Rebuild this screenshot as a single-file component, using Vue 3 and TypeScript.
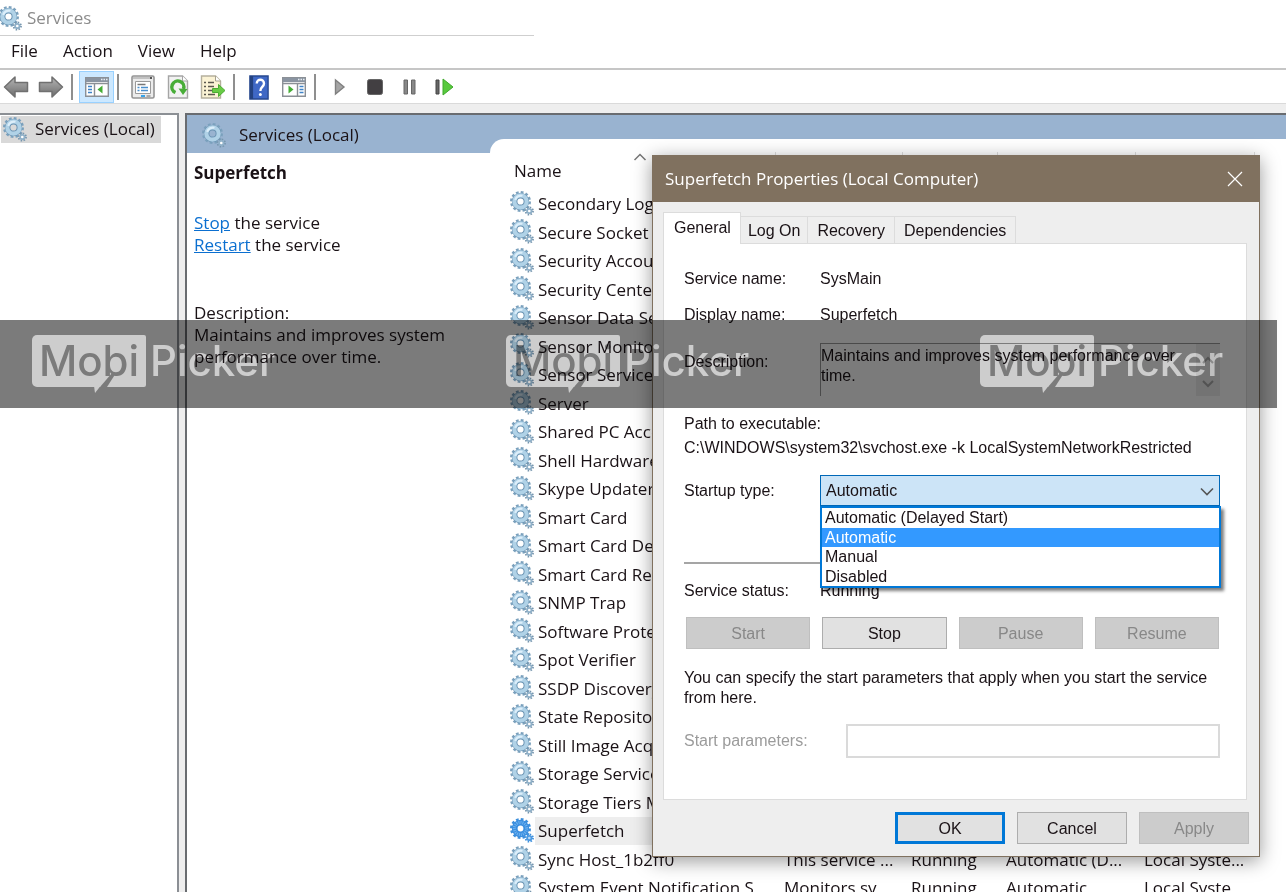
<script setup lang="ts">
import { ref } from 'vue'

interface ServiceRow {
  name: string
  description?: string
  status?: string
  startup?: string
  logOn?: string
}

const menus: string[] = ['File', 'Action', 'View', 'Help']

const services: ServiceRow[] = [
  { name: 'Secondary Logon' },
  { name: 'Secure Socket Tunn...' },
  { name: 'Security Accounts' },
  { name: 'Security Center' },
  { name: 'Sensor Data Service' },
  { name: 'Sensor Monitoring' },
  { name: 'Sensor Service' },
  { name: 'Server' },
  { name: 'Shared PC Account' },
  { name: 'Shell Hardware' },
  { name: 'Skype Updater' },
  { name: 'Smart Card' },
  { name: 'Smart Card Device' },
  { name: 'Smart Card Removal' },
  { name: 'SNMP Trap' },
  { name: 'Software Protection' },
  { name: 'Spot Verifier' },
  { name: 'SSDP Discovery' },
  { name: 'State Repository' },
  { name: 'Still Image Acquisition' },
  { name: 'Storage Service' },
  { name: 'Storage Tiers Mgmt' },
  { name: 'Superfetch' },
  { name: 'Sync Host_1b2ff0', description: 'This service ...', status: 'Running', startup: 'Automatic (D...', logOn: 'Local Syste...' },
  { name: 'System Event Notification S...', description: 'Monitors sy...', status: 'Running', startup: 'Automatic', logOn: 'Local Syste...' },
]

const selectedService = ref('Superfetch')
const tabs: string[] = ['General', 'Log On', 'Recovery', 'Dependencies']
const activeTab = ref('General')
const startupTypes: string[] = ['Automatic (Delayed Start)', 'Automatic', 'Manual', 'Disabled']
const startupType = ref('Automatic')
const description = ref('Maintains and improves system performance over time.')
</script>

<template>
  <div class="window">
    <svg class="defs" width="0" height="0" aria-hidden="true">
      <symbol id="gear" viewBox="0 0 24 25">
        <circle cx="10.500" cy="10.500" r="9.200" fill="none" stroke="#7ba1bd" stroke-width="2.600" stroke-dasharray="2.700 2.117" />
        <circle cx="10.500" cy="10.500" r="5.900" fill="none" stroke="#6d95b4" stroke-width="5.600" />
        <circle cx="10.500" cy="10.500" r="6.200" fill="none" stroke="#b0d2e7" stroke-width="4.200" />
        <path d="M5.200 8.800A6 6 0 0 1 12.500 4.800" fill="none" stroke="#dceefa" stroke-width="2.200" />
        <circle cx="19.300" cy="20" r="3.700" fill="none" stroke="#7695ad" stroke-width="1.800" stroke-dasharray="1.500 1.400" />
        <circle cx="19.300" cy="20" r="2.200" fill="#fff" stroke="#8fb0c8" stroke-width="1.800" />
      </symbol>
      <symbol id="gear-selected" viewBox="0 0 24 25">
        <circle cx="10.500" cy="10.500" r="9.200" fill="none" stroke="#3d8fdc" stroke-width="2.600" stroke-dasharray="2.700 2.117" />
        <circle cx="10.500" cy="10.500" r="5.800" fill="none" stroke="#3a8edf" stroke-width="5.800" />
        <circle cx="10.500" cy="10.500" r="6.100" fill="none" stroke="#6eb2ef" stroke-width="3" stroke-dasharray="1 1" />
        <circle cx="19.300" cy="20" r="3.700" fill="none" stroke="#3d8fdc" stroke-width="1.800" stroke-dasharray="1.500 1.400" />
        <circle cx="19.300" cy="20" r="2.200" fill="#b9d9f7" stroke="#4c9ae2" stroke-width="1.800" />
      </symbol>
      <linearGradient id="arrow-fill" x1="0" y1="0" x2="0" y2="1">
        <stop offset="0" stop-color="#b5b5b5" />
        <stop offset="1" stop-color="#6c6c6c" />
      </linearGradient>
    </svg>

    <header class="titlebar">
      <svg class="gear"><use href="#gear" /></svg>
      <span>Services</span>
    </header>

    <nav class="menubar">
      <button v-for="menu in menus" :key="menu" type="button">{{ menu }}</button>
    </nav>

    <div class="toolbar">
      <button type="button" aria-label="Back">
        <svg width="26" height="24" viewBox="0 0 26 24"><path d="M1.500 12 12 2v5.500h12.500v9H12V22z" fill="url(#arrow-fill)" stroke="#707070" stroke-width="1.500" stroke-linejoin="round" /></svg>
      </button>
      <button type="button" aria-label="Forward">
        <svg width="26" height="24" viewBox="0 0 26 24"><path d="M24.500 12 14 2v5.500H1.500v9H14V22z" fill="url(#arrow-fill)" stroke="#707070" stroke-width="1.500" stroke-linejoin="round" /></svg>
      </button>
      <i class="sep"></i>
      <button type="button" class="pressed" aria-label="Show console tree">
        <svg width="24" height="20" viewBox="0 0 24 20"><path d="M.7.700h22.600v18.600H.7z" fill="#fff" stroke="#8b9096" stroke-width="1.400" /><path d="M1 1h22v4H1z" fill="#8a94a1" /><path d="M16 2.500h1.500m1 0H20m1 0h1.500" stroke="#e8edf2" stroke-width="1.400" /><path d="M1 6.500h22M9.500 7v12" stroke="#8b9096" stroke-width="1.400" /><path d="M3 9.500h4M3 12.500h4M3 15.500h4" stroke="#3f83c8" stroke-width="1.500" /><path d="M17.500 8.500v8l-5-4z" fill="#45ad35" /></svg>
      </button>
      <i class="sep"></i>
      <button type="button" aria-label="Properties">
        <svg width="24" height="24" viewBox="0 0 24 24"><rect x="1" y="1" width="22" height="22" rx="1.500" fill="#ececec" stroke="#949494" stroke-width="1.600" /><path d="M2 3h18" stroke="#b4b4b4" stroke-width="1.500" /><path d="M19 3h2" stroke="#555" stroke-width="2" /><path d="M4.500 6.500h15v12h-15z" fill="#fff" stroke="#9a9a9a" /><path d="M6.500 9.500h8" stroke="#777" stroke-width="1.500" /><path d="M6.500 12.500h2m1.500 0h7M6.500 15.500h2m1.500 0h7" stroke="#4a90ce" stroke-width="1.400" /><path d="M10 21h4" stroke="#38a3e8" stroke-width="2" /><path d="M15.500 21h4" stroke="#aaa" stroke-width="2" /></svg>
      </button>
      <button type="button" aria-label="Refresh">
        <svg width="22" height="24" viewBox="0 0 22 24"><path d="M1.500 1h14l5 5v17h-19z" fill="#f2f2f2" stroke="#a5a5a5" stroke-width="1.400" /><path d="M15.500 1v5h5" fill="#fff" stroke="#a5a5a5" /><path d="M8.500 17.500A6 6 0 1 1 16.500 14" fill="none" stroke="#48ad38" stroke-width="3.500" /><path d="m11.500 13.500 9 .5-4.500 6z" fill="#48ad38" /></svg>
      </button>
      <button type="button" aria-label="Export list">
        <svg width="26" height="24" viewBox="0 0 26 24"><path d="M1.500 1h14l5 5v17h-19z" fill="#fbf3d5" stroke="#b5b09d" stroke-width="1.400" /><path d="M15.500 1v5h5" fill="#fff" stroke="#a6a18e" /><path d="M4 7.500h2m2 0h6M4 11.500h2m2 0h6M4 15.500h2m2 0h5M4 19.500h2m2 0h7" stroke="#5b584f" stroke-width="1.500" /><path d="M12.500 13.500h6v-4l6.500 6-6.500 6v-4h-6z" fill="#68cb45" stroke="#4bab33" /></svg>
      </button>
      <i class="sep"></i>
      <button type="button" aria-label="Help">
        <svg width="20" height="25" viewBox="0 0 22 25" preserveAspectRatio="none"><path d="M1 1h20v23H1z" fill="#3f68c5" stroke="#27488f" stroke-width="1.500" /><path d="M1 1h3.500v23H1z" fill="#24427f" /><path d="M8.500 8.500c0-5 8-5 8 0 0 3.500-4 3-4 7.500" fill="none" stroke="#fff" stroke-width="2.600" /><circle cx="12.500" cy="19.500" r="1.600" fill="#fff" /></svg>
      </button>
      <button type="button" aria-label="Show action pane">
        <svg width="24" height="20" viewBox="0 0 24 20"><path d="M.7.700h22.600v18.600H.7z" fill="#fff" stroke="#8b9096" stroke-width="1.400" /><path d="M1 1h22v4H1z" fill="#8a94a1" /><path d="M16 2.500h1.500m1 0H20m1 0h1.500" stroke="#e8edf2" stroke-width="1.400" /><path d="M1 6.500h22M15.500 7v12" stroke="#8b9096" stroke-width="1.400" /><path d="M17.500 9.500h4m-4 3h4m-4 3h4" stroke="#3f83c8" stroke-width="1.500" /><path d="M6.500 8.500v8l5-4z" fill="#45ad35" /></svg>
      </button>
      <i class="sep"></i>
      <button type="button" aria-label="Start service">
        <svg width="12" height="18" viewBox="0 0 12 18"><path d="M1.500 2v14L10 9z" fill="#a5a5a5" stroke="#808080" stroke-width="1.400" /></svg>
      </button>
      <button type="button" aria-label="Stop service">
        <svg width="16" height="16" viewBox="0 0 16 16"><rect x=".5" y=".5" width="15" height="15" rx="2" fill="#423f42" stroke="#666" /></svg>
      </button>
      <button type="button" aria-label="Pause service">
        <svg width="13" height="16" viewBox="0 0 13 16"><path d="M1 1h3.500v14H1zM8.500 1H12v14H8.500z" fill="#888" stroke="#666" /></svg>
      </button>
      <button type="button" aria-label="Restart service">
        <svg width="19" height="18" viewBox="0 0 19 18"><path d="M1 2h3v14H1z" fill="#666" stroke="#444" /><path d="M8 1v16l10-8z" fill="#58c93d" stroke="#3fa92c" /></svg>
      </button>
    </div>

    <main class="panes">
      <aside class="tree">
        <button type="button" class="tree-node">
          <svg class="gear"><use href="#gear" /></svg>
          <span>Services (Local)</span>
        </button>
      </aside>

      <section class="content">
        <div class="detail">
          <h1>
            <svg class="gear"><use href="#gear" /></svg>
            <span>Services (Local)</span>
          </h1>
          <div class="detail-body">
            <h2>{{ selectedService }}</h2>
            <p class="actions"><a href="#stop">Stop</a> the service<br /><a href="#restart">Restart</a> the service</p>
            <p>Description:<br />{{ description }}</p>
          </div>
        </div>

        <div class="list">
          <table>
            <colgroup>
              <col class="c-name" /><col class="c-desc" /><col class="c-status" /><col class="c-startup" /><col class="c-logon" /><col />
            </colgroup>
            <thead>
              <tr>
                <th>
                  <svg class="sort" width="14" height="8" viewBox="0 0 14 8"><path d="M1.500 7 7 1.500 12.500 7" fill="none" stroke="#777" stroke-width="1.500" /></svg>
                  <span class="heading">Name</span>
                </th>
                <th v-for="n in 5" :key="n"><i class="divider"></i></th>
              </tr>
            </thead>
            <tbody>
              <tr v-for="row in services" :key="row.name" :class="{ selected: row.name === selectedService }">
                <td>
                  <div class="name">
                    <svg class="gear"><use :href="row.name === selectedService ? '#gear-selected' : '#gear'" /></svg>
                    <span>{{ row.name }}</span>
                  </div>
                </td>
                <td>{{ row.description }}</td>
                <td>{{ row.status }}</td>
                <td>{{ row.startup }}</td>
                <td>{{ row.logOn }}</td>
                <td></td>
              </tr>
            </tbody>
          </table>
        </div>
      </section>
    </main>

    <section class="dialog" role="dialog" aria-labelledby="dialog-title">
      <header class="dialog-title">
        <span id="dialog-title">Superfetch Properties (Local Computer)</span>
        <button type="button" aria-label="Close">
          <svg width="16" height="16" viewBox="0 0 16 16"><path d="m1 1 14 14M15 1 1 15" stroke="#fff" stroke-width="1.200" /></svg>
        </button>
      </header>

      <div class="dialog-body">
        <div class="tabs" role="tablist">
          <button
            v-for="tab in tabs"
            :key="tab"
            type="button"
            role="tab"
            :aria-selected="tab === activeTab"
            :class="{ active: tab === activeTab }"
            @click="activeTab = tab"
          >{{ tab }}</button>
        </div>

        <div class="panel">
          <dl class="facts">
            <dt>Service name:</dt>
            <dd>SysMain</dd>
            <dt>Display name:</dt>
            <dd>Superfetch</dd>
          </dl>
          <div class="field description">
            <label for="description">Description:</label>
            <div class="description-box">
              <textarea id="description" v-model="description" readonly></textarea>
              <div class="scroll">
                <svg width="12" height="8" viewBox="0 0 12 8"><path d="m1 7 5-5 5 5" fill="none" stroke="#aaa" stroke-width="2" /></svg>
                <svg width="12" height="8" viewBox="0 0 12 8"><path d="m1 1 5 5 5-5" fill="none" stroke="#aaa" stroke-width="2" /></svg>
              </div>
            </div>
          </div>
          <p class="path">Path to executable:<br />C:\WINDOWS\system32\svchost.exe -k LocalSystemNetworkRestricted</p>
          <div class="field startup">
            <label for="startup">Startup type:</label>
            <div class="combo">
              <select id="startup" v-model="startupType">
                <option v-for="type in startupTypes" :key="type">{{ type }}</option>
              </select>
              <svg class="chevron" width="14" height="9" viewBox="0 0 14 9"><path d="m1 1.500 6 6 6-6" fill="none" stroke="#555" stroke-width="1.600" /></svg>
              <ul class="options" role="listbox">
                <li
                  v-for="type in startupTypes"
                  :key="type"
                  role="option"
                  :aria-selected="type === startupType"
                  :class="{ chosen: type === startupType }"
                  @click="startupType = type"
                >{{ type }}</li>
              </ul>
            </div>
          </div>
          <hr />
          <dl class="facts status">
            <dt>Service status:</dt>
            <dd>Running</dd>
          </dl>
          <div class="controls">
            <button type="button" disabled>Start</button>
            <button type="button">Stop</button>
            <button type="button" disabled>Pause</button>
            <button type="button" disabled>Resume</button>
          </div>
          <p class="hint">You can specify the start parameters that apply when you start the service from here.</p>
          <div class="field params">
            <label for="params">Start parameters:</label>
            <input id="params" type="text" disabled />
          </div>
        </div>

        <footer>
          <button type="button" class="default">OK</button>
          <button type="button">Cancel</button>
          <button type="button" disabled>Apply</button>
        </footer>
      </div>
    </section>

    <div class="band" aria-hidden="true">
      <div v-for="n in 3" :key="n" class="brand">
        <span class="bubble">Mobi<svg width="26" height="26" viewBox="0 0 26 26"><path d="M8 19h7L24 5h-4z" fill="#7b7b7b" /><path d="M2 18h6.500L3 25z" fill="#cdcdcd" /></svg></span>
        <span class="picker">Picker</span>
      </div>
    </div>
  </div>
</template>

<style>
html,
body {
  background: #fff;
}
</style>

<style scoped>
* {
  box-sizing: border-box;
}
.window {
  position: relative;
  display: flex;
  flex-direction: column;
  height: 100vh;
  overflow: hidden;
  background: #fff;
  color: #1a1216;
  font: 17px/22px "Open Sans", "Noto Sans", sans-serif;
}
.defs {
  position: absolute;
}
button,
select,
input,
textarea {
  margin: 0;
  padding: 0;
  border: 0;
  border-radius: 0;
  background: none;
  color: inherit;
  font: inherit;
}
h1,
h2,
p,
dl,
dd,
ul {
  margin: 0;
  padding: 0;
}
.gear {
  flex: none;
  width: 24px;
  height: 25px;
}
.titlebar {
  display: flex;
  flex: none;
  align-items: center;
  gap: 5px;
  height: 36px;
  margin-left: -2px;
  color: #8b8b8b;
  background: linear-gradient(#cfcfcf, #cfcfcf) 0 100% / 536px 1px no-repeat;
}
.menubar {
  display: flex;
  flex: none;
  gap: 25px;
  height: 34px;
  padding: 0 11px 2px;
  border-bottom: 2px solid #c6c6c6;
}
.toolbar {
  display: flex;
  flex: none;
  align-items: center;
  height: 34px;
  margin-left: -2px;
  padding-top: 1px;
  border-bottom: 1px solid #dadada;
}
.toolbar button {
  display: flex;
  align-items: center;
  justify-content: center;
  width: 35px;
  height: 32px;
}
.toolbar .pressed {
  background: #cce8ff;
  border: 1px solid #99d1ff;
}
.sep {
  width: 2px;
  height: 26px;
  margin: 0 6px 0 3px;
  background: #8f8f8f;
}
.panes {
  display: grid;
  flex: 1;
  grid-template-columns: 179px 1fr;
  gap: 6px;
  min-height: 0;
  padding-top: 9px;
  background: #eee;
}
.tree {
  padding: 1px;
  background: #fff;
  border: solid #8b8f94;
  border-width: 2px 2px 0 0;
}
.tree-node {
  display: flex;
  align-items: center;
  gap: 8px;
  height: 27px;
  padding: 0 6px 1px 2px;
  background: #d9d9d9;
  white-space: nowrap;
}
.content {
  display: grid;
  grid-template-columns: 303px 1fr;
  min-width: 0;
  min-height: 0;
  overflow: hidden;
  background: #99b3d0;
  border: solid #696c70;
  border-width: 2px 0 0 2px;
}
.detail {
  display: flex;
  flex-direction: column;
}
.detail h1 {
  display: flex;
  flex: none;
  align-items: center;
  gap: 13px;
  height: 38px;
  padding: 2px 0 0 15px;
  font: inherit;
}
.detail-body {
  flex: 1;
  padding: 9px 40px 0 7px;
  background: #fff;
}
.detail-body h2 {
  margin-bottom: 28px;
  font: inherit;
  font-weight: 700;
}
.actions {
  margin-bottom: 46px;
}
.actions a {
  color: #0b6fd0;
}
.list {
  margin-top: 24px;
  padding-left: 15px;
  overflow: hidden;
  background: #fff;
  border-top-left-radius: 14px;
}
table {
  width: 100%;
  border-collapse: collapse;
  table-layout: fixed;
}
.c-name {
  width: 270px;
}
.c-desc {
  width: 127px;
}
.c-status {
  width: 95px;
}
.c-startup {
  width: 138px;
}
.c-logon {
  width: 119px;
}
th {
  height: 51px;
  padding: 14px 0 0;
  font-weight: 400;
  line-height: 20px;
  text-align: left;
  vertical-align: top;
}
th + th {
  padding-top: 13px;
}
.heading {
  padding-left: 9px;
}
.divider {
  display: block;
  height: 37px;
  border-left: 1px solid #dedede;
}
.sort {
  display: block;
  margin: 0 auto;
}
tbody tr {
  height: 29px;
}
tbody tr:nth-child(odd) {
  height: 28px;
}
td {
  padding: 0 0 0 9px;
  line-height: 22px;
  white-space: nowrap;
}
td:first-child {
  padding-left: 5px;
}
.name {
  display: flex;
  align-items: center;
  height: 28px;
}
.name .gear {
  margin-bottom: 2px;
}
.name span {
  flex: 1;
  margin-left: 1px;
  padding: 3px 0 3px 3px;
}
.selected span {
  background: #eee;
}

.dialog {
  position: absolute;
  top: 155px;
  left: 652px;
  width: 608px;
  border: 1px solid #80715f;
  background: #eee;
  box-shadow: 0 4px 18px rgba(0, 0, 0, 0.4);
  font: 16px/20px "Liberation Sans", Arial, sans-serif;
}
.dialog-title {
  display: flex;
  align-items: center;
  justify-content: space-between;
  height: 46px;
  padding: 0 16px 0 12px;
  background: #80715f;
  color: #fff;
  font: 17px/22px "Open Sans", "Noto Sans", sans-serif;
}
.dialog-title svg {
  display: block;
}
.dialog-body {
  padding: 9px 10px 10px;
}
.tabs {
  display: flex;
  align-items: flex-end;
  height: 32px;
}
.tabs button {
  height: 27px;
  padding: 1px 9px 0;
  border: 1px solid #dcdcdc;
  border-width: 1px 1px 0 0;
}
.tabs .active {
  position: relative;
  height: 32px;
  margin-bottom: -1px;
  padding: 0 9px 2px 10px;
  border-width: 1px 1px 0 1px;
  background: #fff;
}
.tabs .active + button {
  padding: 1px 7px 0;
}
.panel {
  display: flex;
  flex-direction: column;
  height: 557px;
  margin-right: 2px;
  padding: 25px 26px 0 20px;
  border: 1px solid #dcdcdc;
  background: #fff;
}
.facts {
  display: grid;
  grid-template-columns: 136px 1fr;
  row-gap: 16px;
}
.field {
  display: grid;
  grid-template-columns: 136px 1fr;
  align-items: center;
}
.description {
  margin-top: 18px;
}
.description label {
  margin-bottom: 16px;
}
.description-box {
  display: flex;
  height: 53px;
  border: solid #999;
  border-width: 1px 0 0 1px;
}
.description textarea {
  flex: 1;
  min-width: 0;
  padding: 2px 0 0;
  overflow: hidden;
  outline: 0;
  resize: none;
}
.scroll {
  display: flex;
  flex-direction: column;
  align-items: center;
  justify-content: space-between;
  width: 24px;
  padding: 12px 0 8px;
  background: #eee;
}
.path {
  margin-top: 16px;
  line-height: 24px;
}
.startup {
  margin-top: 15px;
}
.combo {
  position: relative;
}
.combo select {
  display: block;
  width: 100%;
  height: 31px;
  padding-left: 5px;
  appearance: none;
  border: 1px solid #0068b8;
  background: #cce4f7;
}
.chevron {
  position: absolute;
  top: 12px;
  right: 6px;
  pointer-events: none;
}
.options {
  position: absolute;
  top: 31px;
  right: -1px;
  left: 0;
  display: grid;
  grid-auto-rows: 1fr;
  height: 82px;
  border: 2px solid #0078d7;
  background: #fff;
  box-shadow: 3px 3px 3px rgba(0, 0, 0, 0.5);
  line-height: 19px;
  list-style: none;
}
.options li {
  padding-left: 3px;
}
.options .chosen {
  background: #3399ff;
  color: #fff;
}
hr {
  width: 100%;
  height: 2px;
  margin: 56px 0 0;
  border: 0;
  background: #a5a5a5;
}
.status {
  margin-top: 17px;
}
.controls {
  display: grid;
  grid-template-columns: repeat(4, 1fr);
  gap: 12px;
  margin: 16px 1px 0 2px;
}
.controls button,
footer button {
  height: 32px;
  padding-top: 1px;
  border: 1px solid #adadad;
  background: #e1e1e1;
}
.controls button:disabled,
footer button:disabled {
  border-color: #bfbfbf;
  background: #ccc;
  color: #888;
}
.hint {
  margin-top: 19px;
}
.params {
  grid-template-columns: 162px 1fr;
  margin-top: 16px;
  color: #9b9b9b;
}
.params input {
  width: 100%;
  height: 34px;
  border: 2px solid #dadada;
}
footer {
  display: flex;
  justify-content: flex-end;
  gap: 12px;
  padding: 12px 0 2px;
}
footer button {
  width: 110px;
}
footer .default {
  border: 3px solid #0078d7;
}

.band {
  position: absolute;
  top: 320px;
  right: 9px;
  left: 0;
  display: flex;
  height: 88px;
  overflow: hidden;
  background: #7b7b7b;
  mix-blend-mode: multiply;
  pointer-events: none;
  font: 500 42px/52px Inter, "DejaVu Sans", sans-serif;
}
.brand {
  display: flex;
  flex: none;
  gap: 4px;
  width: 474px;
  padding: 15px 0 0 32px;
}
.bubble {
  position: relative;
  width: 114px;
  height: 52px;
  border-radius: 5px 2px 2px 5px;
  background: #cdcdcd;
  color: #7b7b7b;
  text-align: center;
}
.bubble svg {
  position: absolute;
  top: 33px;
  left: 60px;
}
.picker {
  color: #cdcdcd;
}
</style>
